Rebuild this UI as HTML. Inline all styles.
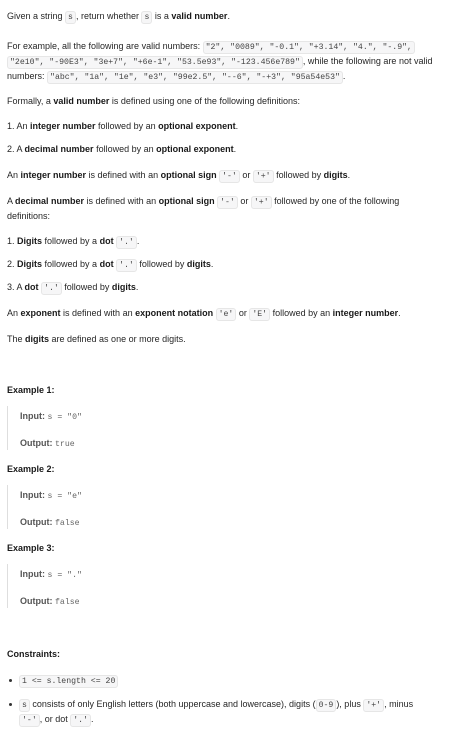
<!DOCTYPE html>
<html><head><meta charset="utf-8"><style>
body{margin:0;width:470px;height:736px;background:#fff;font-family:"Liberation Sans",sans-serif;font-size:9px;color:#262626;position:relative;overflow:hidden}
.l{position:absolute;left:7px;white-space:nowrap;line-height:12px}
b{font-weight:bold;color:#1a1a1a}
code{font-family:"Liberation Mono",monospace;font-size:8.2px;background:#f6f6f7;border:1px solid #e6e6e6;border-radius:3px;padding:1px 2px;color:#444}
.ex{position:absolute;left:7px;border-left:1px solid #dedede;width:200px}
.ex div{position:absolute;left:12px;white-space:nowrap;color:#666;line-height:12px}
.ex b{color:#555}
.mono{font-family:"Liberation Mono",monospace;font-size:8.2px}
.dot{position:absolute;left:9px;width:3px;height:3px;border-radius:50%;background:#333}
</style></head><body>
<div class="l" style="top:10px">Given a string <code>s</code>, return whether <code>s</code> is a <b>valid number</b>.</div>
<div class="l" style="top:40px">For example, all the following are valid numbers: <code>"2", "0089", "-0.1", "+3.14", "4.", "-.9",</code></div>
<div class="l" style="top:55px"><code>"2e10", "-90E3", "3e+7", "+6e-1", "53.5e93", "-123.456e789"</code>, while the following are not valid</div>
<div class="l" style="top:70px">numbers: <code>"abc", "1a", "1e", "e3", "99e2.5", "--6", "-+3", "95a54e53"</code>.</div>
<div class="l" style="top:95px">Formally, a <b>valid number</b> is defined using one of the following definitions:</div>
<div class="l" style="top:120px">1. An <b>integer number</b> followed by an <b>optional exponent</b>.</div>
<div class="l" style="top:143px">2. A <b>decimal number</b> followed by an <b>optional exponent</b>.</div>
<div class="l" style="top:169px">An <b>integer number</b> is defined with an <b>optional sign</b> <code>'-'</code> or <code>'+'</code> followed by <b>digits</b>.</div>
<div class="l" style="top:195px">A <b>decimal number</b> is defined with an <b>optional sign</b> <code>'-'</code> or <code>'+'</code> followed by one of the following</div>
<div class="l" style="top:210px">definitions:</div>
<div class="l" style="top:235px">1. <b>Digits</b> followed by a <b>dot</b> <code>'.'</code>.</div>
<div class="l" style="top:258px">2. <b>Digits</b> followed by a <b>dot</b> <code>'.'</code> followed by <b>digits</b>.</div>
<div class="l" style="top:281px">3. A <b>dot</b> <code>'.'</code> followed by <b>digits</b>.</div>
<div class="l" style="top:307px">An <b>exponent</b> is defined with an <b>exponent notation</b> <code>'e'</code> or <code>'E'</code> followed by an <b>integer number</b>.</div>
<div class="l" style="top:333px">The <b>digits</b> are defined as one or more digits.</div>

<div class="l" style="top:384px"><b>Example 1:</b></div>
<div class="ex" style="top:406px;height:44px"><div style="top:4px"><b>Input:</b> <span class="mono">s = "0"</span></div><div style="top:31px"><b>Output:</b> <span class="mono">true</span></div></div>
<div class="l" style="top:463px"><b>Example 2:</b></div>
<div class="ex" style="top:485px;height:44px"><div style="top:4px"><b>Input:</b> <span class="mono">s = "e"</span></div><div style="top:31px"><b>Output:</b> <span class="mono">false</span></div></div>
<div class="l" style="top:542px"><b>Example 3:</b></div>
<div class="ex" style="top:564px;height:44px"><div style="top:4px"><b>Input:</b> <span class="mono">s = "."</span></div><div style="top:31px"><b>Output:</b> <span class="mono">false</span></div></div>

<div class="l" style="top:648px"><b>Constraints:</b></div>
<div class="dot" style="top:679px"></div>
<div class="l" style="top:674px;left:19px"><code>1 &lt;= s.length &lt;= 20</code></div>
<div class="dot" style="top:703px"></div>
<div class="l" style="top:698px;left:19px"><code>s</code> consists of only English letters (both uppercase and lowercase), digits (<code>0-9</code>), plus <code>'+'</code>, minus</div>
<div class="l" style="top:713px;left:19px"><code>'-'</code>, or dot <code>'.'</code>.</div>
</body></html>
